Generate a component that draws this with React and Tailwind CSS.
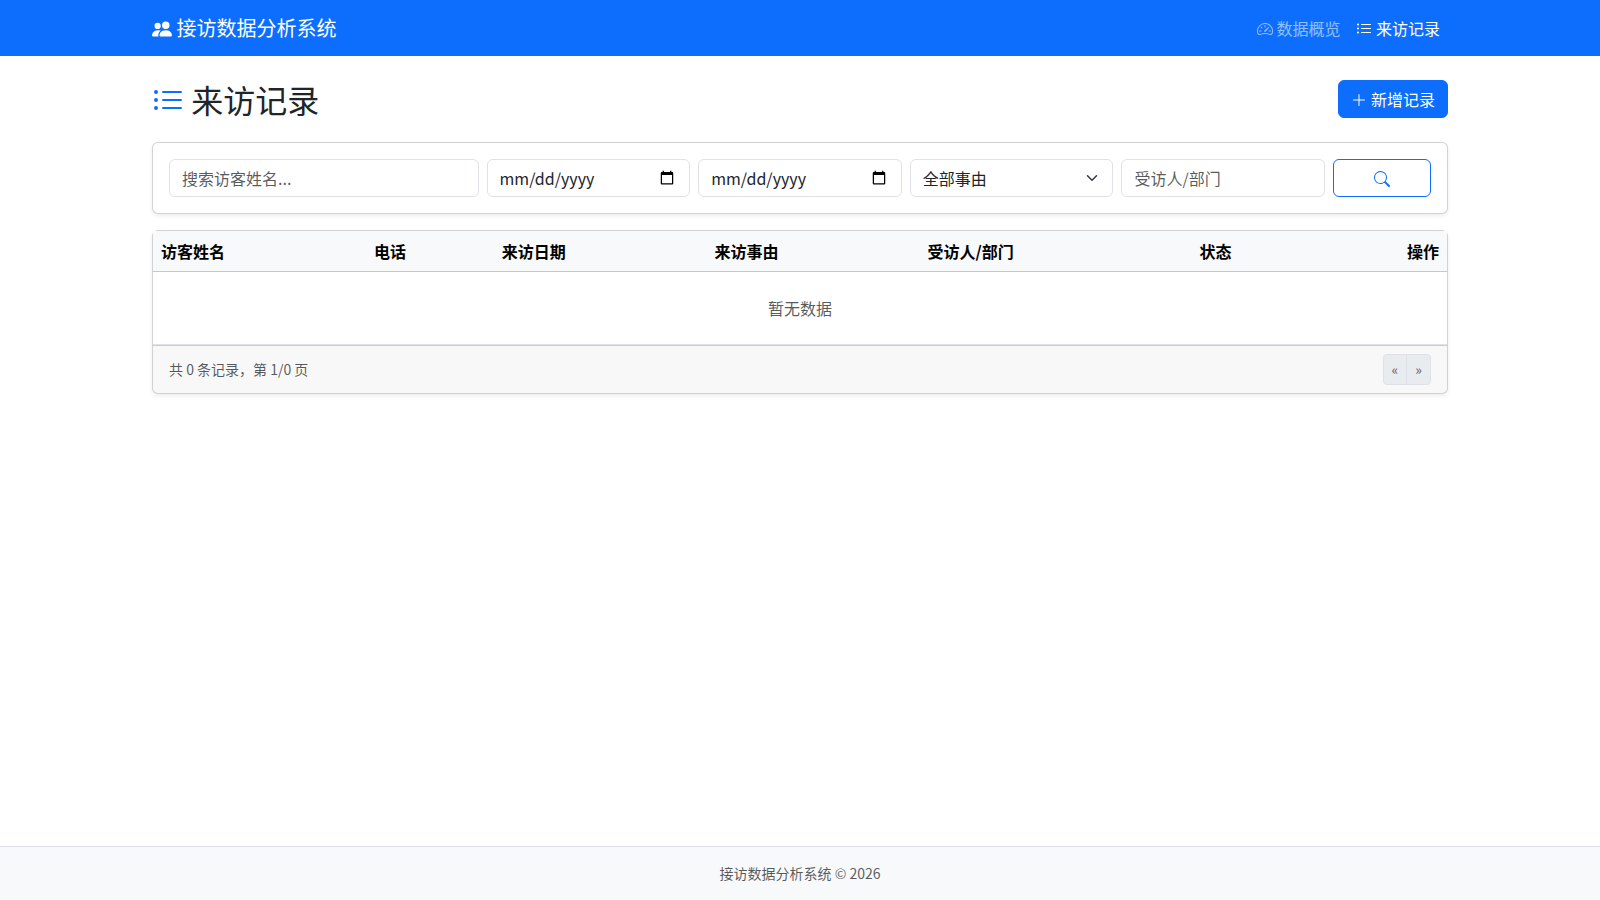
import React, { useState } from 'react';
import { BsListUl, BsPeopleFill, BsPlusLg, BsSearch, BsSpeedometer2 } from 'react-icons/bs';

const COLUMNS = ['访客姓名', '电话', '来访日期', '来访事由', '受访人/部门', '状态', '操作'];

const REASONS = ['全部事由'];

const fieldClass =
  'block w-full h-[38px] rounded-md border border-[#dee2e6] bg-white px-3 py-1.5 text-base text-[#212529] placeholder:text-[#212529]/75 outline-none focus:border-[#86b7fe]';

// drop the default padding around the month, day and year parts
const dateClass =
  '[&::-webkit-datetime-edit-month-field]:p-0 [&::-webkit-datetime-edit-day-field]:p-0 [&::-webkit-datetime-edit-year-field]:p-0 [&::-webkit-datetime-edit-text]:p-0';

const Navbar = () => (
  <nav className="bg-[#0d6efd] py-2">
    <div className="mx-auto flex w-full max-w-[1320px] items-center justify-between px-3">
      <a href="#" className="py-[5px] text-xl leading-[30px] text-white whitespace-nowrap">
        <BsPeopleFill className="inline-block align-[-0.125em]" /> 接访数据分析系统
      </a>
      <div className="flex">
        <a href="#" className="p-2 text-white/55 hover:text-white/75">
          <BsSpeedometer2 className="inline-block align-[-0.125em]" /> 数据概览
        </a>
        <a href="#" className="p-2 text-white">
          <BsListUl className="inline-block align-[-0.125em]" /> 来访记录
        </a>
      </div>
    </div>
  </nav>
);

const Filters = () => {
  const [name, setName] = useState('');
  const [target, setTarget] = useState('');

  return (
    <div className="mb-4 rounded-md border border-black/[0.175] bg-white p-4 shadow-[0_2px_4px_rgba(0,0,0,0.075)]">
      <form className="-mx-1 flex" onSubmit={(e) => e.preventDefault()}>
        <div className="w-3/12 px-1">
          <input
            type="text"
            className={fieldClass}
            placeholder="搜索访客姓名..."
            value={name}
            onChange={(e) => setName(e.target.value)}
          />
        </div>
        <div className="w-2/12 px-1">
          <input type="date" className={`${fieldClass} ${dateClass}`} />
        </div>
        <div className="w-2/12 px-1">
          <input type="date" className={`${fieldClass} ${dateClass}`} />
        </div>
        <div className="relative w-2/12 px-1">
          <select className={`${fieldClass} appearance-none pr-9`}>
            {REASONS.map((reason) => (
              <option key={reason}>{reason}</option>
            ))}
          </select>
          <svg
            viewBox="0 0 16 16"
            className="pointer-events-none absolute top-[13px] right-[17px] h-3 w-4"
            fill="none"
            stroke="#343a40"
            strokeWidth="2"
            strokeLinecap="round"
            strokeLinejoin="round"
          >
            <path d="m2 5 6 6 6-6" />
          </svg>
        </div>
        <div className="w-2/12 px-1">
          <input
            type="text"
            className={fieldClass}
            placeholder="受访人/部门"
            value={target}
            onChange={(e) => setTarget(e.target.value)}
          />
        </div>
        <div className="w-1/12 px-1">
          <button
            type="submit"
            className="h-[38px] w-full rounded-md border border-[#0d6efd] px-3 py-1.5 text-center text-[#0d6efd] hover:bg-[#0d6efd] hover:text-white"
          >
            <BsSearch className="inline-block align-[-0.125em]" />
          </button>
        </div>
      </form>
    </div>
  );
};

const RecordTable = ({ records = [] }) => (
  <div className="rounded-md border border-black/[0.175] bg-white shadow-[0_2px_4px_rgba(0,0,0,0.075)]">
    <table className="w-full border-collapse">
      <thead>
        <tr className="bg-[#f8f9fa] text-black">
          {COLUMNS.map((col, i) => (
            <th
              key={col}
              className={`border-b border-[#c6c7c8] p-2 font-bold ${i === COLUMNS.length - 1 ? 'text-right' : 'text-left'}`}
            >
              {col}
            </th>
          ))}
        </tr>
      </thead>
      <tbody>
        {records.length === 0 && (
          <tr>
            <td colSpan={COLUMNS.length} className="border-b border-[#dee2e6] px-2 py-6 text-center text-[#212529]/75">
              暂无数据
            </td>
          </tr>
        )}
      </tbody>
    </table>

    <div className="flex items-center justify-between rounded-b-[5px] border-t border-black/[0.175] bg-[#212529]/[0.03] px-4 py-2">
      <small className="text-[14px] leading-[21px] text-[#212529]/75">共 {records.length} 条记录，第 1/0 页</small>
      <ul className="flex text-[14px] leading-[21px] text-[#212529]/75">
        <li className="rounded-l border border-[#dee2e6] bg-[#e9ecef] px-2 py-1">«</li>
        <li className="-ml-px rounded-r border border-[#dee2e6] bg-[#e9ecef] px-2 py-1">»</li>
      </ul>
    </div>
  </div>
);

const App = () => (
  <div className="flex min-h-screen flex-col bg-white font-['Noto_Sans_CJK_SC',sans-serif] text-base text-[#212529]">
    <Navbar />

    <main className="mx-auto w-full max-w-[1320px] grow px-3 py-6">
      <div className="mb-6 flex items-center justify-between">
        <h2 className="text-[32px] leading-[1.2] font-normal">
          <BsListUl className="inline-block align-[-0.125em] text-[#0d6efd]" /> 来访记录
        </h2>
        <a href="#" className="rounded-md border border-[#0d6efd] bg-[#0d6efd] px-3 py-1.5 text-white">
          <BsPlusLg className="inline-block align-[-0.125em]" /> 新增记录
        </a>
      </div>
      <Filters />
      <RecordTable />
    </main>

    <footer className="border-t border-[#dee2e6] bg-[#f8f9fa] py-4 text-center">
      <small className="block text-[14px] leading-[21px] text-[#212529]/75">接访数据分析系统 © 2026</small>
    </footer>
  </div>
);

export default App;
